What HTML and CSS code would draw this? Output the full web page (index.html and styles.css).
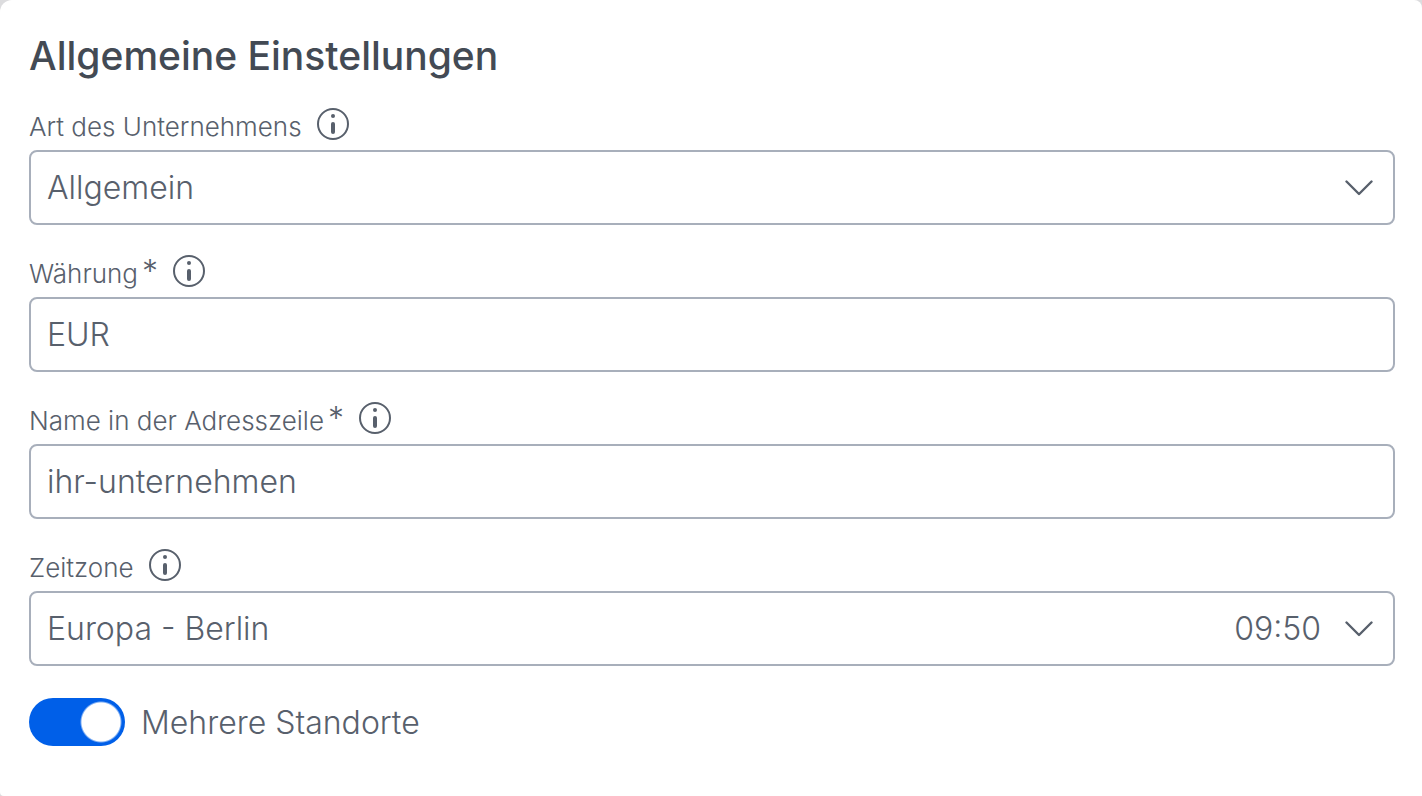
FILE: index.html
```html
<!DOCTYPE html>
<html lang="de">
<head>
  <meta charset="UTF-8">
  <meta name="viewport" content="width=device-width, initial-scale=1.0">
  <title>Allgemeine Einstellungen</title>
  <link rel="stylesheet" href="styles.css">
</head>
<body>

<svg class="sprite" aria-hidden="true">
  <symbol id="info" viewBox="0 0 32 32">
    <circle cx="16" cy="16" r="15" fill="none" stroke="currentColor" stroke-width="2"/>
    <circle cx="16" cy="8" r="2" fill="currentColor"/>
    <path d="M16 16v8" fill="none" stroke="currentColor" stroke-width="4" stroke-linecap="round"/>
  </symbol>
  <symbol id="chevron" viewBox="0 0 28 16">
    <path d="M1.5 1.5L14 14L26.5 1.5" fill="none" stroke="currentColor" stroke-width="2.4" stroke-linecap="round" stroke-linejoin="round"/>
  </symbol>
</svg>

<form class="card">
  <h1>Allgemeine Einstellungen</h1>

  <div class="field">
    <div class="label-row">
      <label for="type">Art des Unternehmens</label>
      <button type="button" class="info" aria-label="Info"><svg><use href="#info"/></svg></button>
    </div>
    <div class="control">
      <select id="type">
        <option>Allgemein</option>
      </select>
      <svg class="chevron"><use href="#chevron"/></svg>
    </div>
  </div>

  <div class="field">
    <div class="label-row">
      <label for="currency">Währung<span class="required">*</span></label>
      <button type="button" class="info" aria-label="Info"><svg><use href="#info"/></svg></button>
    </div>
    <div class="control">
      <input type="text" id="currency" value="EUR" required>
    </div>
  </div>

  <div class="field">
    <div class="label-row">
      <label for="slug">Name in der Adresszeile<span class="required">*</span></label>
      <button type="button" class="info" aria-label="Info"><svg><use href="#info"/></svg></button>
    </div>
    <div class="control">
      <input type="text" id="slug" value="ihr-unternehmen" required>
    </div>
  </div>

  <div class="field">
    <div class="label-row">
      <label for="timezone">Zeitzone</label>
      <button type="button" class="info" aria-label="Info"><svg><use href="#info"/></svg></button>
    </div>
    <div class="control">
      <select id="timezone">
        <option>Europa - Berlin</option>
      </select>
      <span class="time">09:50</span>
      <svg class="chevron"><use href="#chevron"/></svg>
    </div>
  </div>

  <label class="switch">
    <input type="checkbox" checked>
    <span>Mehrere Standorte</span>
  </label>
</form>

</body>
</html>
```
FILE: styles.css
```css
* {
  box-sizing: border-box;
}

body {
  margin: 0;
  background-color: #dcdcde;
  font-family: Inter, "Liberation Sans", sans-serif;
  font-weight: 300;
  color: #58606c;
}

.sprite {
  display: none;
}

.card {
  min-height: 100vh;
  padding: 32px 27px 48px 29px;
  border-radius: 12px 8px 0 4px;
  background-color: white;
}

h1 {
  margin: 0 0 27px;
  font-size: 39px;
  line-height: 48px;
  font-weight: 500;
  color: #434a54;
}

.field {
  margin-bottom: 29px;
}

.label-row {
  display: flex;
  align-items: center;
  gap: 15px;
  height: 34px;
  margin-bottom: 9px;
}

.label-row label {
  padding-top: 6px;
  font-size: 26px;
  line-height: 32px;
}

.required {
  margin-left: 4px;
  font-size: 32px;
  line-height: 24px;
}

.info {
  width: 32px;
  height: 32px;
  padding: 0;
  border: none;
  background: none;
  color: inherit;
  cursor: pointer;
}

.info svg {
  display: block;
  width: 32px;
  height: 32px;
}

.control {
  display: grid;
  grid-template-columns: 1fr auto auto;
  align-items: center;
  height: 75px;
  border: 2px solid #a8afbb;
  border-radius: 8px;
}

.control input,
.control select {
  grid-area: 1 / 1 / 2 / 4;
  width: 100%;
  height: 100%;
  padding: 0 16px;
  border: none;
  outline: none;
  appearance: none;
  background: none;
  font-family: inherit;
  font-size: 32px;
  font-weight: inherit;
  color: inherit;
}

.time {
  grid-area: 1 / 2;
  margin-right: 24px;
  font-size: 32px;
  pointer-events: none;
}

.chevron {
  grid-area: 1 / 3;
  width: 28px;
  height: 16px;
  margin-right: 20px;
  pointer-events: none;
}

.switch {
  display: flex;
  align-items: center;
  gap: 16px;
  margin-top: 32px;
  font-size: 32px;
  cursor: pointer;
}

.switch input {
  appearance: none;
  width: 96px;
  height: 48px;
  margin: 0;
  border-radius: 24px;
  background: radial-gradient(circle at 72px 24px, white 19px, #005fe8 21px);
}
```
